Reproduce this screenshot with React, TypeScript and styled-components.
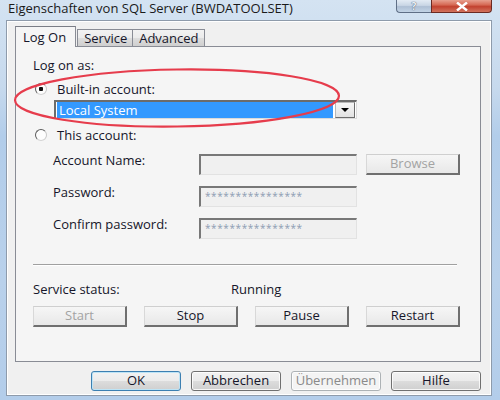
import React from 'react';
import styled, { createGlobalStyle, css } from 'styled-components';

const GlobalStyle = createGlobalStyle`
  html, body {
    margin: 0;
    padding: 0;
  }
  body {
    font-family: 'Open Sans', 'Noto Sans', 'DejaVu Sans', sans-serif;
    font-size: 13px;
    color: #16162a;
  }
`;

const tabs = ['Log On', 'Service', 'Advanced'];

const accountFields = [
  { label: 'Account Name:', value: '', browse: true },
  { label: 'Password:', value: '****************', browse: false },
  { label: 'Confirm password:', value: '****************', browse: false },
];

const App: React.FC = () => {
  return (
    <Window>
      <GlobalStyle />
      <TitleBar>
        <Title>Eigenschaften von SQL Server (BWDATOOLSET)</Title>
        <CaptionButtons>
          <HelpButton>?</HelpButton>
          <CloseButton>
            <svg width="14" height="9" viewBox="0 0 14 9">
              <path d="M2 0.5 L12 8.5 M12 0.5 L2 8.5" stroke="#fff" strokeWidth="2.4" />
            </svg>
          </CloseButton>
        </CaptionButtons>
      </TitleBar>

      <Client>
        <TabStrip>
          {tabs.map((tab, index) => (
            <Tab key={tab} active={index === 0}>
              {tab}
            </Tab>
          ))}
        </TabStrip>

        <TabPanel>
          <Label>Log on as:</Label>

          <RadioRow>
            <Radio checked />
            <span>Built-in account:</span>
          </RadioRow>

          <Select>
            <SelectValue>Local System</SelectValue>
            <SelectArrow>
              <svg width="8" height="4" viewBox="0 0 8 4">
                <path d="M0 0 H8 L4 4 Z" fill="#000" />
              </svg>
            </SelectArrow>
          </Select>

          <RadioRow>
            <Radio />
            <span>This account:</span>
          </RadioRow>

          <FieldGrid>
            {accountFields.map(field => (
              <React.Fragment key={field.label}>
                <FieldLabel>{field.label}</FieldLabel>
                <Input>{field.value}</Input>
                {field.browse ? <PanelButton disabled>Browse</PanelButton> : <span />}
              </React.Fragment>
            ))}
          </FieldGrid>

          <Separator />

          <StatusRow>
            <StatusLabel>Service status:</StatusLabel>
            <span>Running</span>
          </StatusRow>

          <ServiceButtons>
            <PanelButton disabled>Start</PanelButton>
            <PanelButton>Stop</PanelButton>
            <PanelButton>Pause</PanelButton>
            <PanelButton>Restart</PanelButton>
          </ServiceButtons>
        </TabPanel>

        <DialogButtons>
          <DialogButton focused>OK</DialogButton>
          <DialogButton>Abbrechen</DialogButton>
          <DialogButton disabled>Übernehmen</DialogButton>
          <DialogButton>Hilfe</DialogButton>
        </DialogButtons>
      </Client>

      <Highlight width="500" height="400" viewBox="0 0 500 400">
        <ellipse
          cx="177"
          cy="98"
          rx="162"
          ry="28.5"
          fill="none"
          stroke="#e63c4c"
          strokeWidth="2.2"
          transform="rotate(-0.8 177 98)"
        />
      </Highlight>
    </Window>
  );
};

const Window = styled.div`
  position: relative;
  width: 500px;
  height: 400px;
  overflow: hidden;
  display: flex;
  flex-direction: column;
  background: linear-gradient(180deg, #d4e3f2 0%, #c6d9ed 22%, #b2cdea 34%, #b9d1eb 70%, #b3cdea 100%);
`;

const TitleBar = styled.div`
  height: 20px;
  display: flex;
  align-items: flex-start;
  padding-left: 8px;
  padding-right: 8px;
`;

const Title = styled.div`
  font-size: 13px;
  line-height: 17px;
  color: #1a1a1a;
`;

const CaptionButtons = styled.div`
  margin-left: auto;
  display: flex;
  height: 13px;
`;

const captionBase = css`
  height: 12px;
  border: 1px solid #5f6f86;
  border-top: none;
  display: flex;
  align-items: center;
  justify-content: center;
  overflow: hidden;
`;

const HelpButton = styled.div`
  ${captionBase};
  width: 34px;
  border-bottom-left-radius: 4px;
  border-right: none;
  background: linear-gradient(180deg, #e3ebf4 0%, #c9d6e5 45%, #aebfd4 55%, #c3d4e6 100%);
  color: #eef2f7;
  font-weight: bold;
  font-size: 10px;
  line-height: 12px;
  text-shadow: 0 0 1px #55657a, 0 0 1px #55657a;
`;

const CloseButton = styled.div`
  ${captionBase};
  width: 59px;
  border-color: #6b2a22;
  border-bottom-right-radius: 4px;
  background: linear-gradient(180deg, #e7a08f 0%, #d66a55 40%, #c2422f 55%, #d2735d 100%);
`;

const Client = styled.div`
  flex: 1;
  margin: 0 8px 4px 6px;
  background: #f0f0f0;
  border: 1px solid #8e9bab;
  box-shadow: inset 0 0 0 1px #ffffff;
  padding: 6px 10px 0 8px;
  display: flex;
  flex-direction: column;
`;

const TabStrip = styled.div`
  display: flex;
  align-items: flex-end;
  height: 19px;
  position: relative;
  z-index: 1;
`;

const Tab = styled.div<{ active?: boolean }>`
  border: 1px solid #898c95;
  border-bottom: none;
  margin-right: -1px;
  ${({ active }) =>
    active
      ? css`
          height: 20px;
          line-height: 20px;
          padding: 0 9px 0 7px;
          background: #f5f5f5;
          margin-bottom: -1px;
          margin-right: 1px;
          border-top-color: #7a7d86;
        `
      : css`
          height: 16px;
          line-height: 17px;
          padding: 0 5px 0 6px;
          background: linear-gradient(180deg, #f2f2f2 0%, #ebebeb 50%, #dddddd 51%, #cfcfcf 100%);
        `}
`;

const TabPanel = styled.div`
  height: 314px;
  border: 1px solid #898c95;
  background: #f5f5f5;
  padding: 0 0 0 17px;
  display: flex;
  flex-direction: column;
`;

const Label = styled.div`
  line-height: 16px;
  margin-top: 10px;
`;

const RadioRow = styled.div`
  display: flex;
  align-items: center;
  gap: 10px;
  height: 16px;
  line-height: 16px;
  margin-top: 8px;
  padding-left: 2px;
`;

const Radio = styled.span<{ checked?: boolean }>`
  width: 10px;
  height: 10px;
  border-radius: 50%;
  border: 1px solid #5d5d5d;
  border-right-color: #c8c8c8;
  border-bottom-color: #d4d4d4;
  background: radial-gradient(circle at 50% 50%, ${({ checked }) => (checked ? '#111 0 2px, #fdfdfd 2.5px' : '#fdfdfd 0')}, #fdfdfd);
  flex: none;
`;

const Select = styled.div`
  margin: 3px 0 0 21px;
  width: 303px;
  height: 19px;
  box-sizing: border-box;
  display: flex;
  border-top: 2px solid #6c6c6c;
  border-left: 2px solid #6c6c6c;
  border-right: 1px solid #dadada;
  border-bottom: 1px solid #dadada;
  background: #fff;
  padding: 0 1px;
`;

const SelectValue = styled.div`
  flex: 1;
  background: #3399ff;
  color: #fff;
  line-height: 16px;
  padding-left: 2px;
`;

const SelectArrow = styled.div`
  width: 20px;
  margin-left: 2px;
  background: linear-gradient(180deg, #f6f6f6, #e2e2e2);
  border: 1px solid #b8b8b8;
  border-right-color: #6c6c6c;
  border-bottom-color: #6c6c6c;
  box-sizing: border-box;
  display: flex;
  align-items: center;
  justify-content: center;
`;

const FieldGrid = styled.div`
  display: grid;
  grid-template-columns: 137px 158px 94px;
  column-gap: 9px;
  row-gap: 11px;
  margin: 11px 0 0 20px;
`;

const FieldLabel = styled.div`
  line-height: 16px;
  margin-top: -2px;
`;

const Input = styled.div`
  height: 21px;
  box-sizing: border-box;
  border-top: 2px solid #787878;
  border-left: 2px solid #787878;
  border-right: 1px solid #e2e2e2;
  border-bottom: 1px solid #e2e2e2;
  background: #f0f0f0;
  color: #8d9cb2;
  font-size: 10px;
  line-height: 16px;
  letter-spacing: 0.6px;
  padding-left: 4px;
  overflow: hidden;
`;

const PanelButton = styled.div<{ disabled?: boolean }>`
  height: 21px;
  box-sizing: border-box;
  border-top: 1px solid #cfcfcf;
  border-left: 1px solid #d8d8d8;
  border-right: 2px solid #6f6f6f;
  border-bottom: 2px solid #6f6f6f;
  background: linear-gradient(180deg, #f6f6f6 0%, #e8e8e8 100%);
  text-align: center;
  line-height: 17px;
  color: ${({ disabled }) => (disabled ? '#a3a3a3' : '#16162a')};
`;

const Separator = styled.div`
  margin-top: 25px;
  width: 424px;
  height: 1px;
  background: #a0a0a0;
  border-bottom: 1px solid #ffffff;
`;

const StatusRow = styled.div`
  display: flex;
  line-height: 16px;
  margin-top: 15px;
`;

const StatusLabel = styled.span`
  width: 198px;
`;

const ServiceButtons = styled.div`
  display: grid;
  grid-template-columns: repeat(4, 94px);
  column-gap: 17px;
  margin-top: 9px;
`;

const DialogButtons = styled.div`
  display: flex;
  justify-content: flex-end;
  gap: 10px;
  margin-top: 9px;
`;

const DialogButton = styled.div<{ focused?: boolean; disabled?: boolean }>`
  width: 90px;
  height: 20px;
  box-sizing: border-box;
  border: 1px solid #707070;
  border-radius: 3px;
  background: linear-gradient(180deg, #f2f2f2 0%, #ebebeb 49%, #dddddd 50%, #cfcfcf 100%);
  box-shadow: inset 0 0 0 1px rgba(255, 255, 255, 0.8);
  text-align: center;
  line-height: 17px;
  ${({ focused }) =>
    focused &&
    css`
      border-color: #3c7fb1;
      box-shadow: inset 0 0 0 1px #bde4f6;
    `}
  ${({ disabled }) =>
    disabled &&
    css`
      border-color: #adb2b5;
      background: #f4f4f4;
      color: #8a8a8a;
    `}
`;

const Highlight = styled.svg`
  position: absolute;
  left: 0;
  top: 0;
  pointer-events: none;
`;

export default App;
